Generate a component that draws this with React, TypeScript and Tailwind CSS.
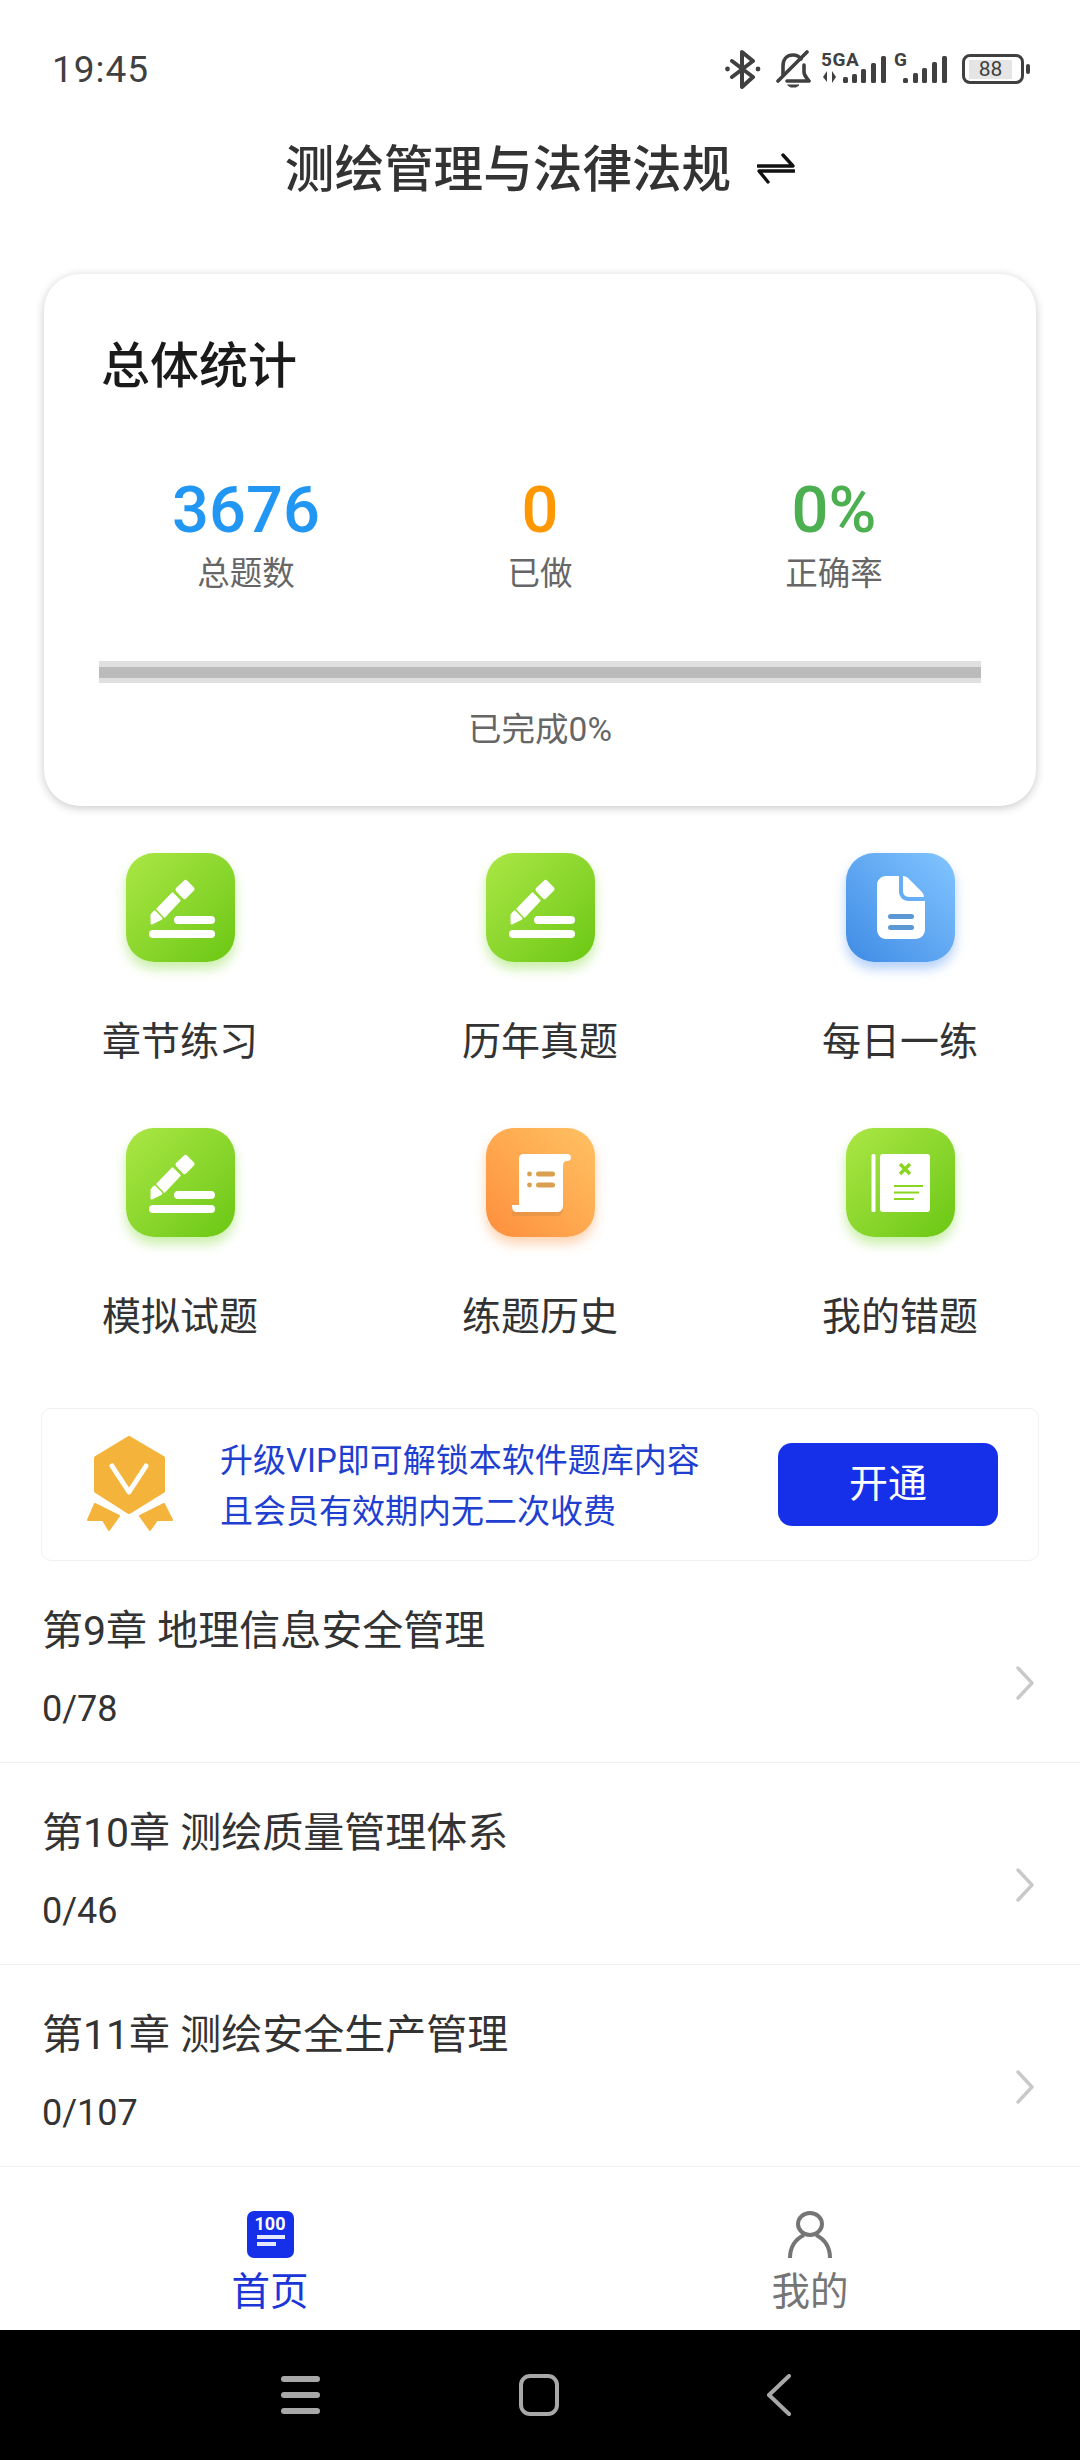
import type { ReactNode } from "react";

const sans = "font-['Roboto','Noto_Sans_CJK_SC',sans-serif]";

const chapters = [
  { title: "第9章 地理信息安全管理", progress: "0/78" },
  { title: "第10章 测绘质量管理体系", progress: "0/46" },
  { title: "第11章 测绘安全生产管理", progress: "0/107" },
];

function Signal({ bars, height }: { bars: [number, number][]; height: number }) {
  return (
    <>
      {bars.map(([x, h]) => (
        <rect key={x} x={x} y={height - h} width="5" height={h} rx="1.6" fill="#404040" />
      ))}
    </>
  );
}

function StatusIcons() {
  return (
    <div className="flex items-center">
      {/* bluetooth */}
      <svg width="36" height="39" viewBox="0 0 36 39" fill="none" stroke="#404040" strokeWidth="4" strokeLinejoin="round" strokeLinecap="round">
        <path d="M7 11 28 27 17 37V2L28 11 7 27" />
        <circle cx="2.5" cy="19" r="1.4" fill="#404040" strokeWidth="2" />
        <circle cx="33" cy="19" r="1.4" fill="#404040" strokeWidth="2" />
      </svg>
      {/* muted bell */}
      <svg className="ml-[15px]" width="35" height="38" viewBox="0 0 35 38" fill="none" stroke="#404040" strokeWidth="3.6" strokeLinecap="round" strokeLinejoin="round">
        <path d="M31 2 2 31" />
        <path d="M7 25V16C7 9 11 5 17 5 20 5 23 6 25 9" />
        <path d="M28 15V22C28 26 31 28 33 31H11" />
        <path d="M12 35H23L20 37H15Z" fill="#404040" strokeWidth="1" />
      </svg>
      {/* 5GA signal */}
      <svg className="-mt-[6px] ml-[10px]" width="67" height="40" viewBox="0 -6 67 40">
        <text x="0" y="14" fontFamily="Roboto, sans-serif" fontWeight="700" fontSize="19" letterSpacing="0.6" fill="#404040">5GA</text>
        <path d="M6 19V30L2 25ZM11 19V31L15 25Z" fill="#404040" />
        <Signal height={31} bars={[[22, 6], [31, 9], [40, 14], [50, 20], [60, 27]]} />
      </svg>
      {/* G signal */}
      <svg className="-mt-[6px] ml-[6px]" width="54" height="40" viewBox="0 -6 54 40">
        <text x="0" y="14" fontFamily="Roboto, sans-serif" fontWeight="700" fontSize="19" fill="#404040">G</text>
        <Signal height={31} bars={[[9, 5], [19, 10], [28, 15], [38, 21], [48, 27]]} />
      </svg>
      {/* battery */}
      <div className="ml-[14px] flex items-center">
        <div className="flex h-[30px] w-[62px] items-center rounded-[8px] border-[3px] border-[#404040] pl-[4px]">
          <span className="flex h-[19px] w-[43px] items-center justify-center bg-[#e5e5e5] font-['Roboto'] text-[21px] leading-none text-[#404040]">88</span>
        </div>
        <div className="ml-[2px] h-[10px] w-[4px] rounded-full bg-[#404040]" />
      </div>
    </div>
  );
}

function Stat({ value, label, color }: { value: string; label: string; color: string }) {
  return (
    <div className="flex w-[294px] flex-col items-center">
      <span className={`h-[70px] text-[65px] font-medium leading-[70px] ${color}`}>{value}</span>
      <span className="mt-[7px] text-[32.5px] leading-[44px] text-[#666]">{label}</span>
    </div>
  );
}

function PencilGlyph() {
  return (
    <svg width="109" height="109" viewBox="0 0 109 109" fill="#fff" stroke="#fff" strokeLinejoin="round">
      <polygon points="59.5,29.5 66,36 58.5,43.5 52,36.5" strokeWidth="5" />
      <polygon points="46.5,40 54,47.5 38.5,64 31,56" strokeWidth="1.5" />
      <polygon points="28.5,59 35,65.5 26,70 26,62" strokeWidth="3" />
      <rect x="48" y="63" width="41" height="8" rx="4" stroke="none" />
      <rect x="23" y="77" width="66" height="8" rx="4" stroke="none" />
    </svg>
  );
}

function DocGlyph() {
  return (
    <svg width="109" height="109" viewBox="0 0 109 109">
      <path d="M40 23H53V38C53 44 57 48 63 48H79V76C79 82 75 86 69 86H40C35 86 31 82 31 76V32C31 27 35 23 40 23Z" fill="#fff" />
      <path d="M57 23C59 23 61 24 62 25L76 39C77 41 78 42 78 44H63C59 44 57 41 57 38Z" fill="#fff" />
      <rect x="42" y="61" width="26" height="5" rx="2.5" fill="#5b98d4" />
      <rect x="42" y="72" width="26" height="5" rx="2.5" fill="#5b98d4" />
    </svg>
  );
}

function ScrollGlyph() {
  return (
    <svg width="109" height="109" viewBox="0 0 109 109">
      <path d="M26 84H72C75 84 77 81 77 77H29C27 77 26 79 26 84Z" fill="#d98f45" transform="translate(0 4)" opacity=".55" />
      <path d="M37 26H81C84 26 85 28 85 30 85 32 83 33 81 33 78 33 77 35 77 38V77H33V30C33 28 35 26 37 26Z" fill="#fff" />
      <path d="M26 77H77C77 81 75 84 72 84H30C27 84 26 81 26 77Z" fill="#fff" />
      <circle cx="43.5" cy="46" r="2.4" fill="#d9a050" />
      <circle cx="43.5" cy="57" r="2.4" fill="#d9a050" />
      <rect x="50" y="43.5" width="19" height="5" rx="2.5" fill="#d9a050" />
      <rect x="50" y="54.5" width="19" height="5" rx="2.5" fill="#d9a050" />
    </svg>
  );
}

function BookGlyph() {
  return (
    <svg width="109" height="109" viewBox="0 0 109 109">
      <rect x="25.5" y="26" width="4" height="58" rx="1.5" fill="#fff" />
      <rect x="34" y="26" width="50" height="58" rx="3" fill="#fff" />
      <path d="M54 36 64 46M64 36 54 46" stroke="#8ad61f" strokeWidth="3.4" />
      <path d="M48 58H77M48 64.5H73M48 71H68" stroke="#8ad61f" strokeWidth="2.2" />
    </svg>
  );
}

function Tile({ glyph, label, tone }: { glyph: ReactNode; label: string; tone: string }) {
  return (
    <div className="flex flex-col items-center">
      <div className={`h-[109px] w-[109px] rounded-[28px] ${tone}`}>{glyph}</div>
      <span className="mt-[55px] h-[50px] text-[39px] leading-[50px] text-[#333]">{label}</span>
    </div>
  );
}

const green = "bg-linear-to-br from-[#abe744] to-[#6ac70e] shadow-[0_7px_12px_rgba(120,215,40,0.4)]";
const blue = "bg-linear-to-bl from-[#82c5ff] to-[#3f8be5] shadow-[0_7px_12px_rgba(70,140,240,0.4)]";
const orange = "bg-linear-to-bl from-[#ffc263] to-[#fd8e3c] shadow-[0_7px_12px_rgba(250,150,70,0.4)]";

function Medal() {
  return (
    <svg width="88" height="97" viewBox="0 0 88 97" fill="#f4b43c" stroke="#f4b43c" strokeLinejoin="round">
      <path d="M43 2 77 22V55L43 76 10 55V22Z" strokeWidth="4" />
      <path d="M26 30 43 56 60 30" fill="none" stroke="#fff" strokeWidth="5" strokeLinecap="round" />
      <path d="M9 68 33 80 23 94 17 84 2 84Z" strokeWidth="2" />
      <path d="M78 68 54 80 64 94 71 84 86 84Z" strokeWidth="2" />
    </svg>
  );
}

function Chevron() {
  return (
    <svg width="18" height="34" viewBox="0 0 18 34" fill="none" stroke="#c9c9c9" strokeWidth="3.4" strokeLinecap="round" strokeLinejoin="round">
      <path d="M2 2 16 17 2 32" />
    </svg>
  );
}

export default function App() {
  return (
    <div className={`flex h-[2460px] w-[1080px] flex-col overflow-hidden bg-white ${sans}`}>
      {/* status bar */}
      <div className="flex h-[136px] shrink-0 items-center justify-between pl-[52px] pr-[50px] pt-[2px]">
        <span className="text-[37px] leading-none tracking-[1px] text-[#404040]">19:45</span>
        <StatusIcons />
      </div>

      {/* subject switcher */}
      <div className="flex h-[62px] shrink-0 items-center justify-center pt-[5px]">
        <span className="text-[49.6px] font-medium leading-[62px] text-[#333]">测绘管理与法律法规</span>
        <svg className="-mt-[3px] ml-[26px]" width="38" height="34" viewBox="0 0 38 34" fill="none" stroke="#111" strokeWidth="3.4" strokeLinecap="round" strokeLinejoin="round">
          <path d="M1 15H36L26 4" />
          <path d="M37 20H2L11 31" />
        </svg>
      </div>

      {/* overall stats card */}
      <div className="mx-[44px] mt-[76px] flex h-[532px] shrink-0 flex-col rounded-[36px] bg-white shadow-[0_2px_10px_rgba(0,0,0,0.22)]">
        <h2 className="ml-[57px] mt-[62px] h-[62px] text-[49px] font-medium leading-[62px] text-[#1a1a1a]">总体统计</h2>
        <div className="mt-[77px] flex justify-center">
          <Stat value="3676" label="总题数" color="text-[#2196f3]" />
          <Stat value="0" label="已做" color="text-[#ff9800]" />
          <Stat value="0%" label="正确率" color="text-[#4caf50]" />
        </div>
        <div className="mx-[55px] mt-[65px] flex h-[22px] items-center bg-[#e0e0e0]">
          <div className="h-[11px] w-full bg-[#bbbbbb]" />
        </div>
        <span className="mt-[25px] text-center text-[33.5px] leading-[44px] text-[#666]">已完成0%</span>
      </div>

      {/* practice shortcuts */}
      <div className="mt-[47px] grid shrink-0 grid-cols-3 gap-y-[61px]">
        <Tile glyph={<PencilGlyph />} label="章节练习" tone={green} />
        <Tile glyph={<PencilGlyph />} label="历年真题" tone={green} />
        <Tile glyph={<DocGlyph />} label="每日一练" tone={blue} />
        <Tile glyph={<PencilGlyph />} label="模拟试题" tone={green} />
        <Tile glyph={<ScrollGlyph />} label="练题历史" tone={orange} />
        <Tile glyph={<BookGlyph />} label="我的错题" tone={green} />
      </div>

      {/* vip banner */}
      <div className="mx-[41px] mt-[66px] flex h-[153px] shrink-0 items-center rounded-[10px] border border-[#f0f0f0] pl-[44px] pr-[40px]">
        <Medal />
        <div className="ml-[46px] flex-1 pt-[2px] text-[33px] leading-[51px] text-[#1f3fd0]">
          <p>升级VIP即可解锁本软件题库内容</p>
          <p>且会员有效期内无二次收费</p>
        </div>
        <button className="flex h-[83px] w-[220px] items-center justify-center rounded-[14px] bg-[#1530e8] text-[39px] leading-none text-white">开通</button>
      </div>

      {/* chapter list */}
      <div className="shrink-0">
        {chapters.map(c => (
          <div key={c.title} className="flex h-[202px] justify-between border-b border-[#f0f0f0] pl-[42px] pr-[46px]">
            <div className="pt-[45px]">
              <p className="h-[50px] text-[41px] leading-[50px] text-[#333]">{c.title}</p>
              <p className="mt-[31px] h-[44px] text-[36px] leading-[44px] text-[#333]">{c.progress}</p>
            </div>
            <div className="mt-[105px]">
              <Chevron />
            </div>
          </div>
        ))}
      </div>

      {/* bottom tabs */}
      <div className="grid h-[163px] shrink-0 grid-cols-2 bg-white pt-[44px]">
        <div className="flex flex-col items-center">
          <div className="flex h-[47px] w-[47px] flex-col items-center rounded-[7px] bg-[#1530e8] pt-[5px]">
            <span className="h-[16px] text-[18px] font-bold leading-[16px] text-white">100</span>
            <span className="ml-[1px] mt-[3px] h-[4px] w-[28px] bg-[#e3e7ff]" />
            <span className="mr-[8px] mt-[3px] h-[4px] w-[19px] bg-[#e3e7ff]" />
          </div>
          <span className="mt-[12px] text-[38.5px] leading-[44px] text-[#1a35d8]">首页</span>
        </div>
        <div className="flex flex-col items-center">
          <svg width="44" height="47" viewBox="0 0 44 47" fill="none" stroke="#757575" strokeWidth="4">
            <ellipse cx="22" cy="13" rx="12" ry="11" />
            <path d="M2 47C2 35 8 28 16 24M42 47C42 35 36 28 28 24" />
          </svg>
          <span className="mt-[12px] text-[38.5px] leading-[44px] text-[#757575]">我的</span>
        </div>
      </div>

      {/* system navigation */}
      <div className="flex h-[130px] shrink-0 items-center bg-black pl-[281px]">
        <div className="flex w-[39px] flex-col gap-[10px]">
          <span className="h-[6px] rounded-full bg-[#a8a8a8]" />
          <span className="h-[6px] rounded-full bg-[#a8a8a8]" />
          <span className="h-[6px] rounded-full bg-[#a8a8a8]" />
        </div>
        <div className="ml-[199px] h-[42px] w-[40px] rounded-[11px] border-[4px] border-[#a8a8a8]" />
        <svg className="ml-[207px]" width="25" height="42" viewBox="0 0 25 42" fill="none" stroke="#a8a8a8" strokeWidth="4" strokeLinecap="round" strokeLinejoin="round">
          <path d="M23 2 3 21 23 40" />
        </svg>
      </div>
    </div>
  );
}
